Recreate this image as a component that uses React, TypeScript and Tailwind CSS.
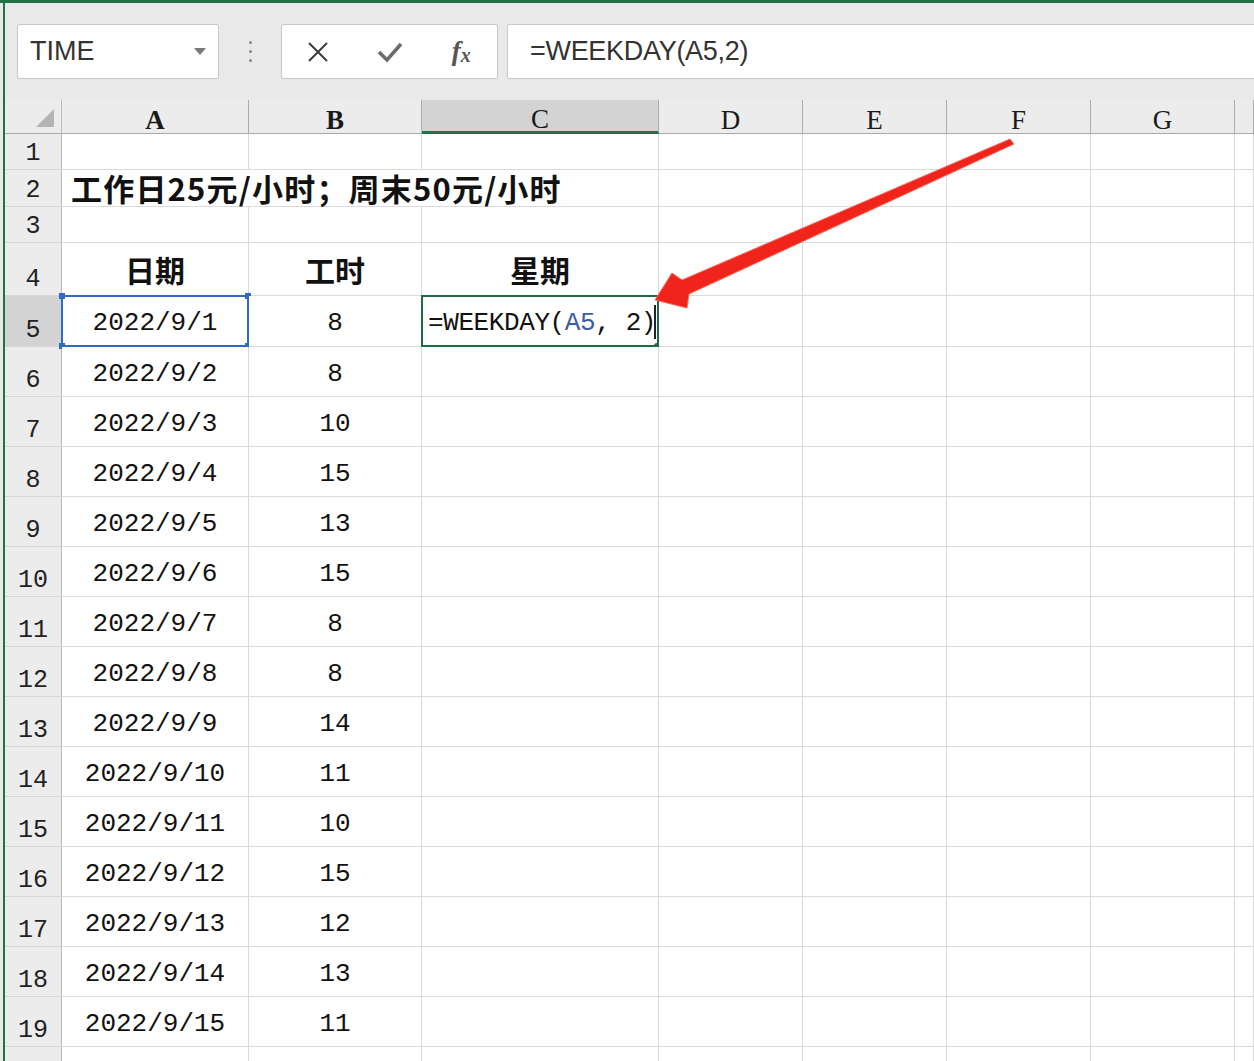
import { Fragment } from "react";

const mono = "font-['Liberation_Mono','Noto_Sans_CJK_SC',monospace]";
const cjk = "font-['Noto_Sans_CJK_SC','Noto_Sans',sans-serif]";

const columns = ["A", "B", "C", "D", "E", "F", "G", ""];

const hours = [8, 8, 10, 15, 13, 15, 8, 8, 14, 11, 10, 15, 12, 13, 11];

function RowHeader({ n, active }: { n: number; active?: boolean }) {
  return (
    <div
      className={
        "flex items-end justify-center pb-[3px] border-r border-b border-r-[#b9b9b9] border-b-[#d6d6d6] text-[25px] leading-none text-[#222] " +
        mono +
        (active ? " bg-[#d3d3d3]" : " bg-[#ececec]")
      }
    >
      {n}
    </div>
  );
}

function Cell({
  children,
  className = "",
}: {
  children?: React.ReactNode;
  className?: string;
}) {
  return (
    <div
      className={
        "relative flex items-center justify-center border-r border-b border-[#dadada] bg-white " +
        className
      }
    >
      {children}
    </div>
  );
}

function Toolbar() {
  return (
    <div className="flex items-start h-[97px] pt-[21px] bg-[#e9e9e9]">
      <div className="ml-[12px] w-[202px] h-[55px] flex items-center justify-between bg-white border border-[#c8c8c8] rounded-[2px] pl-[12px] pr-[12px]">
        <span className="font-['Liberation_Sans',sans-serif] text-[27px] text-[#333]">
          TIME
        </span>
        <span className="w-0 h-0 border-l-[6px] border-r-[6px] border-t-[7px] border-l-transparent border-r-transparent border-t-[#7a7a7a]" />
      </div>
      <div className="w-[62px] h-[55px] flex flex-col items-center justify-center gap-[6px]">
        <span className="w-[3px] h-[3px] rounded-full bg-[#8a8a8a]" />
        <span className="w-[3px] h-[3px] rounded-full bg-[#8a8a8a]" />
        <span className="w-[3px] h-[3px] rounded-full bg-[#8a8a8a]" />
      </div>
      <div className="w-[217px] h-[55px] flex items-center bg-white border border-[#c8c8c8] rounded-[2px]">
        <div className="w-[72px] flex justify-center">
          <svg width="22" height="22" viewBox="0 0 22 22">
            <path d="M2 2 L20 20 M20 2 L2 20" stroke="#3a3a3a" strokeWidth="2" fill="none" />
          </svg>
        </div>
        <div className="w-[72px] flex justify-center">
          <svg width="26" height="22" viewBox="0 0 26 22">
            <path d="M2 11 L10 19 L24 3" stroke="#6b6b6b" strokeWidth="3.5" fill="none" />
          </svg>
        </div>
        <div className="w-[72px] flex justify-center font-['Liberation_Serif',serif] italic font-bold text-[27px] text-[#555] leading-none">
          f<span className="text-[20px] mt-[7px]">x</span>
        </div>
      </div>
      <div className="ml-[9px] flex-1 -mr-[4px] h-[55px] flex items-center bg-white border border-[#c8c8c8] rounded-l-[2px] pl-[22px]">
        <span className="font-['Liberation_Sans',sans-serif] text-[27px] text-[#333] tracking-[-0.3px]">
          =WEEKDAY(A5,2)
        </span>
      </div>
    </div>
  );
}

export default function App() {
  return (
    <div className="relative w-[1254px] h-[1061px] overflow-hidden bg-[#e9e9e9] border-t-[3px] border-[#217346] pl-[3px]">
      <div className="border-l-2 border-[#217346] h-full">
        <Toolbar />
        <div className="grid grid-cols-[57px_187px_173px_237px_144px_144px_144px_144px_19px] grid-rows-[34px_36px_37px_36px_53px_51px_repeat(15,50px)]">
          {/* column header row */}
          <div className="relative bg-[#ececec] border-r border-b border-r-[#b9b9b9] border-b-[#a9a9a9]">
            <svg
              className="absolute right-[7px] bottom-[6px]"
              width="18"
              height="18"
              viewBox="0 0 18 18"
            >
              <polygon points="18,0 18,18 0,18" fill="#b4b4b4" />
            </svg>
          </div>
          {columns.map((c) => (
            <div
              key={c || "end"}
              className={
                "flex items-center justify-center pt-[8px] border-r border-r-[#ababab] text-[27px] leading-none text-[#1a1a1a] font-['Liberation_Serif',serif]" +
                (c === "A" || c === "B" ? " font-bold" : "") +
                (c === "C"
                  ? " bg-[#d3d3d3] border-b-[3px] border-b-[#217346]"
                  : " bg-[#ececec] border-b border-b-[#a9a9a9]")
              }
            >
              {c}
            </div>
          ))}

          {/* row 1 */}
          <RowHeader n={1} />
          {columns.map((c) => (
            <Cell key={"1" + c} />
          ))}

          {/* row 2 */}
          <RowHeader n={2} />
          <Cell className="col-span-3 justify-start pl-[9px] pt-[1px]">
            <span
              className={
                "whitespace-nowrap font-bold text-[31px] tracking-[1.2px] text-[#111] " + cjk
              }
            >
              工作日25元/小时；周末50元/小时
            </span>
          </Cell>
          {columns.slice(3).map((c) => (
            <Cell key={"2" + c} />
          ))}

          {/* row 3 */}
          <RowHeader n={3} />
          {columns.map((c) => (
            <Cell key={"3" + c} />
          ))}

          {/* row 4 */}
          <RowHeader n={4} />
          <Cell>
            <span className={"font-bold text-[30px] text-[#111] " + cjk}>日期</span>
          </Cell>
          <Cell>
            <span className={"font-bold text-[30px] text-[#111] " + cjk}>工时</span>
          </Cell>
          <Cell>
            <span className={"font-bold text-[30px] text-[#111] " + cjk}>星期</span>
          </Cell>
          {columns.slice(3).map((c) => (
            <Cell key={"4" + c} />
          ))}

          {/* data rows */}
          {hours.map((h, i) => {
            const row = i + 5;
            const first = row === 5;
            return (
              <Fragment key={row}>
                <RowHeader n={row} active={first} />
                <Cell className={first ? "bg-[#e9eef7]" : ""}>
                  <span className={"pt-[5px] text-[26px] text-[#111] " + mono}>
                    2022/9/{i + 1}
                  </span>
                  {first && (
                    <div className="absolute -left-[1px] -top-[1px] -right-[1px] -bottom-[1px] border-2 border-[#2f6bc2]">
                      <span className="absolute -left-[4px] -top-[4px] w-[6px] h-[6px] bg-[#2f6bc2]" />
                      <span className="absolute -right-[4px] -top-[4px] w-[6px] h-[6px] bg-[#2f6bc2]" />
                      <span className="absolute -left-[4px] -bottom-[4px] w-[6px] h-[6px] bg-[#2f6bc2]" />
                      <span className="absolute -right-[4px] -bottom-[4px] w-[6px] h-[6px] bg-[#2f6bc2]" />
                    </div>
                  )}
                </Cell>
                <Cell>
                  <span className={"pt-[5px] text-[26px] text-[#111] " + mono}>{h}</span>
                </Cell>
                <Cell className={first ? "justify-start pl-[6px]" : ""}>
                  {first && (
                    <>
                      <span className={"pt-[5px] whitespace-nowrap text-[26px] text-[#111] tracking-[-0.4px] " + mono}>
                        =WEEKDAY(<span className="text-[#3a5dab]">A5</span>, 2)
                      </span>
                      <span className="absolute right-[2px] top-[9px] w-[2px] h-[34px] bg-[#222]" />
                      <div className="absolute -left-[1px] -top-[1px] -right-[1px] -bottom-[1px] border-2 border-[#1f6b46]">
                        <span className="absolute -right-[4px] -bottom-[4px] w-[7px] h-[6px] bg-[#1f6b46] rounded-tl-[3px]" />
                      </div>
                    </>
                  )}
                </Cell>
                {columns.slice(3).map((c) => (
                  <Cell key={row + c} />
                ))}
              </Fragment>
            );
          })}

          {/* row 20 */}
          <RowHeader n={20} />
          {columns.map((c) => (
            <Cell key={"20" + c} />
          ))}
        </div>
      </div>

      {/* red arrow */}
      <svg
        className="absolute left-0 top-0 pointer-events-none"
        width="1254"
        height="1061"
        viewBox="0 0 1254 1061"
      >
        <polygon
          points="655,297 672,270 682,277 1010,136 1014,141 689,291 687,305"
          fill="#f0241b"
          stroke="#f36a5e"
          strokeWidth="1"
          strokeLinejoin="round"
        />
      </svg>

      {/* watermark, cut off at the bottom */}
      <div
        className={
          "absolute left-[903px] top-[1051px] whitespace-nowrap text-[30px] text-[#111] font-bold " + cjk
        }
      >
        头条 @小小国际电脑课
      </div>
    </div>
  );
}
